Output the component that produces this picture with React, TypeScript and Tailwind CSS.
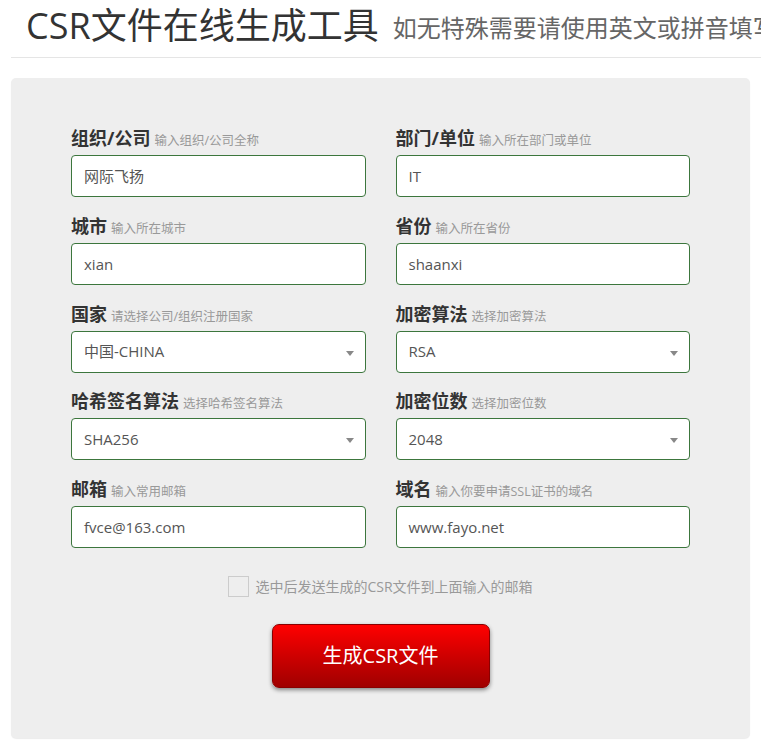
import React from 'react';

const fields = [
    { label: '组织/公司', hint: '输入组织/公司全称', value: '网际飞扬' },
    { label: '部门/单位', hint: '输入所在部门或单位', value: 'IT' },
    { label: '城市', hint: '输入所在城市', value: 'xian' },
    { label: '省份', hint: '输入所在省份', value: 'shaanxi' },
    { label: '国家', hint: '请选择公司/组织注册国家', value: '中国-CHINA', select: true },
    { label: '加密算法', hint: '选择加密算法', value: 'RSA', select: true },
    { label: '哈希签名算法', hint: '选择哈希签名算法', value: 'SHA256', select: true },
    { label: '加密位数', hint: '选择加密位数', value: '2048', select: true },
    { label: '邮箱', hint: '输入常用邮箱', value: 'fvce@163.com' },
    { label: '域名', hint: '输入你要申请SSL证书的域名', value: 'www.fayo.net' },
];

const font = { fontFamily: '"Open Sans", "Noto Sans CJK SC", sans-serif' };

const Field = ({ label, hint, value, select }: { label: string; hint: string; value: string; select?: boolean }) => (
    <div className="flex flex-col">
        <div className="flex items-baseline h-[24px] leading-[24px] mb-[5px] whitespace-nowrap">
            <span className="text-[18px] font-bold text-[#333]">{label}</span>
            <span className="text-[12.5px] text-[#999] ml-[4px]">{hint}</span>
        </div>
        <div className="relative h-[42px] bg-white border border-[#3c763d] rounded-[4px] flex items-center pl-[12px] text-[15px] text-[#555]">
            {value}
            {select && (
                <span className="absolute right-[11px] top-[19px] w-0 h-0 border-l-[4px] border-r-[4px] border-t-[5px] border-l-transparent border-r-transparent border-t-[#888]" />
            )}
        </div>
    </div>
);

export default function App() {
    return (
        <div className="bg-white min-h-[752px] overflow-hidden" style={font}>
            <header className="ml-[11px] border-b border-[#e5e5e5] h-[58px] flex items-end pb-[9px] pl-[15px] whitespace-nowrap overflow-hidden">
                <h1 className="text-[36px] leading-[44px] text-[#333]">CSR文件在线生成工具</h1>
                <span className="text-[24px] leading-[44px] text-[#666] ml-[14px] mb-[-2px]">如无特殊需要请使用英文或拼音填写</span>
            </header>

            <section className="mx-[11px] mt-[20px] h-[660px] bg-[#eeeeee] rounded-[5px] shadow-[0_1px_1px_rgba(0,0,0,0.08)] px-[60px] pt-[48px]">
                <div className="grid grid-cols-2 gap-x-[30px] gap-y-[16.75px]">
                    {fields.map((f) => (
                        <Field key={f.label} {...f} />
                    ))}
                </div>

                <label className="flex items-center justify-center gap-[6px] mt-[28px]">
                    <span className="w-[21px] h-[21px] border border-[#ccc] bg-[#eeeeee]" />
                    <span className="text-[14px] text-[#999]">选中后发送生成的CSR文件到上面输入的邮箱</span>
                </label>

                <div className="flex justify-center mt-[27px]">
                    <button className="w-[218px] h-[64px] rounded-[7px] border border-[#8a0000] bg-gradient-to-b from-[#ff0000] to-[#a00000] text-white text-[20px] shadow-[0_2px_4px_rgba(0,0,0,0.45)]">
                        生成CSR文件
                    </button>
                </div>
            </section>
        </div>
    );
}
